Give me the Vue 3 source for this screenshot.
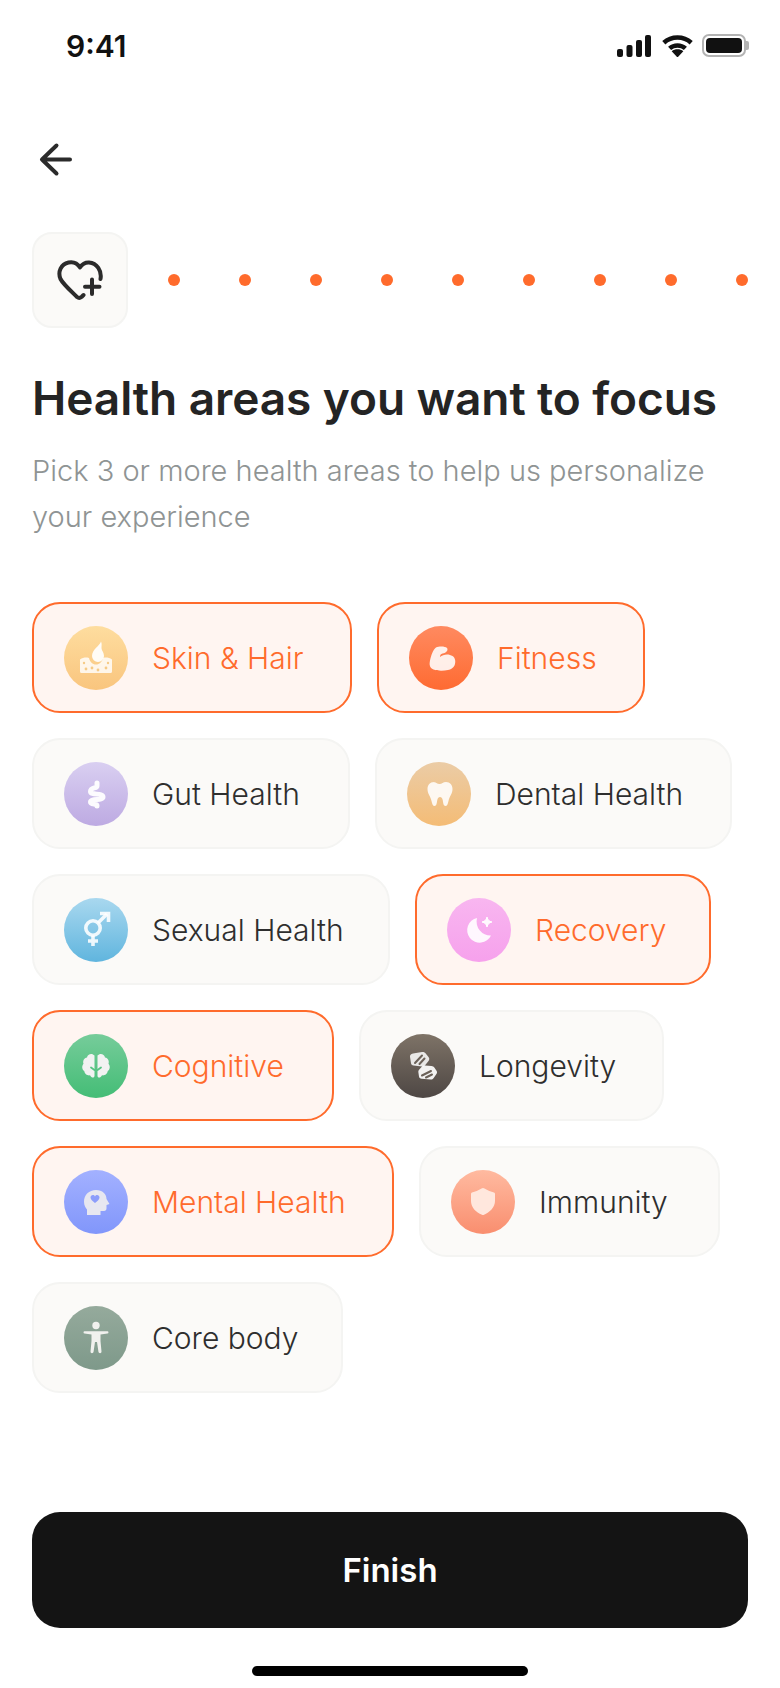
<script setup>
const areas = [
  { key: 'skin', label: 'Skin & Hair', width: 320, on: true, from: '#fedd9f', to: '#f9c57e' },
  { key: 'fitness', label: 'Fitness', width: 268, on: true, from: '#ff8a60', to: '#fe6b32' },
  { key: 'gut', label: 'Gut Health', width: 318, on: false, from: '#d9cff1', to: '#bdaae2' },
  { key: 'dental', label: 'Dental Health', width: 357, on: false, from: '#ebcca6', to: '#f4bc76' },
  { key: 'sexual', label: 'Sexual Health', width: 358, on: false, from: '#a9d8ef', to: '#60b5de' },
  { key: 'recovery', label: 'Recovery', width: 296, on: true, from: '#f8b6f0', to: '#f6a1ec' },
  { key: 'cognitive', label: 'Cognitive', width: 302, on: true, from: '#76cc9a', to: '#44bd76' },
  { key: 'longevity', label: 'Longevity', width: 305, on: false, from: '#7e7367', to: '#4e4744' },
  { key: 'mental', label: 'Mental Health', width: 362, on: true, from: '#a3b1ff', to: '#8196fb' },
  { key: 'immunity', label: 'Immunity', width: 301, on: false, from: '#ffbaa0', to: '#f98e6f' },
  { key: 'core', label: 'Core body', width: 311, on: false, from: '#95aa9c', to: '#7e998a' }
]
const dots = 9
</script>

<template>
  <main class="screen">
    <header class="status">
      <span class="time">9:41</span>
      <div class="status-icons">
        <svg width="34" height="22" viewBox="0 0 34 22" fill="#111">
          <rect x="0" y="14" width="6" height="8" rx="2" />
          <rect x="9.5" y="10" width="6" height="12" rx="2" />
          <rect x="19" y="5" width="6" height="17" rx="2" />
          <rect x="28" y="0" width="6" height="22" rx="2" />
        </svg>
        <svg width="31" height="22" viewBox="0 0 31 22" fill="none" stroke="#111" stroke-width="4.6">
          <path d="M1.800 7.800C9.500.8 21.500.8 29.200 7.800" />
          <path d="M7.600 13.400c4.400-3.900 11.400-3.900 15.800 0" />
          <path d="M15.500 22.500l-5.800-6.300c3.200-2.500 8.400-2.500 11.600 0z" fill="#111" stroke="none" />
        </svg>
        <div class="battery"><i class="battery-level"></i><b class="battery-cap"></b></div>
      </div>
    </header>

    <nav class="nav">
      <svg width="36" height="36" viewBox="0 0 36 36" fill="none" stroke="#2b2b2b" stroke-width="4" stroke-linecap="round" stroke-linejoin="round">
        <path d="M32 17.500H4M18.500 3.500 4 17.500 18.500 31.500" />
      </svg>
    </nav>

    <section class="progress">
      <div class="badge">
        <svg width="46" height="40" viewBox="0 0 46 40" fill="none" stroke="#2b2b2b" stroke-width="4" stroke-linecap="round" stroke-linejoin="round">
          <path d="M43.500 19C45 11 40 3 32 2.500 28 2.300 25 4.500 23 7.500 20.500 3.500 16 1.500 11.500 2.500 4 4 .5 12 3.500 19 6 24 16 33 20 37c1.500 1.200 3 1.200 4.500 0l2-2" />
          <path d="M35 19.500V34M28 26.800h14.500" />
        </svg>
      </div>
      <div class="dots"><span v-for="n in dots" :key="n" class="dot"></span></div>
    </section>

    <h1 class="title">Health areas you want to focus</h1>
    <p class="subtitle">Pick 3 or more health areas to help us personalize<br />your experience</p>

    <section class="chips">
      <div
        v-for="a in areas"
        :key="a.key"
        class="chip"
        :class="{ on: a.on }"
        :style="{ width: a.width + 'px' }"
      >
        <span class="circle" :style="{ background: `linear-gradient(180deg, ${a.from}, ${a.to})` }">
          <svg width="64" height="64" viewBox="0 0 64 64" class="glyph">
            <g v-if="a.key === 'skin'">
              <path d="M16 33.500c3-2 6-2.500 9-1.500 1 4 3.500 6.500 7 6.500s6-2.500 7-6.500c3-1 6-.500 9 1.500v12a1.500 1.500 0 0 1-1.500 1.500h-29a1.500 1.500 0 0 1-1.500-1.500z" fill="#fff" fill-opacity=".82" />
              <path d="M37 15.500c-1 4-9 8-9 14.500a6 6 0 0 0 12 0c0-4-2.500-5-2.500-8.500 0-2 .500-4-.500-6z" fill="#fff" fill-opacity=".92" />
              <g fill="#f6cb86"><circle cx="22" cy="43" r="1.400" /><circle cx="28" cy="42" r="1.400" /><circle cx="34" cy="44" r="1.400" /><circle cx="42" cy="42" r="1.400" /><circle cx="20" cy="37" r="1.200" /><circle cx="44" cy="37" r="1.200" /></g>
            </g>
            <g v-else-if="a.key === 'fitness'">
              <path d="M27 21.500c3-1.500 9-1.500 11 .5 1.500 2-.5 5-4.500 5.500-1.500.3-2.500 1.500-2.500 3.500 3-3 9-3.500 12.500-1 3 2 3.500 6 2 9.500-1.500 3-3.500 3.800-6.500 4.500-5 1-10.500 1-14.500-.5-4-1.700-4.300-5-3.500-9 1-5 3-11 6-13z" fill="#fff" fill-opacity=".88" />
            </g>
            <g v-else-if="a.key === 'gut'">
              <path d="M33 21v3c0 2.800-6.500 1-6.500 5.500 0 4.200 12.500 1 12.500 5.500 0 3.800-12.500 1-12.500 5 0 3 6.500 1 6.500 3.500v.5" fill="none" stroke="#fff" stroke-opacity=".94" stroke-width="5" stroke-linecap="round" stroke-linejoin="round" />
            </g>
            <g v-else-if="a.key === 'dental'">
              <path d="M26 20c3 0 4 2 6.500 2s3.500-2 6.500-2c4 0 6.500 3 6.500 7 0 5-3 7-4 12-.6 3-1.500 5-3 5-2 0-2.300-3-2.800-6-.3-2-1.500-3-2.700-3s-2.400 1-2.700 3c-.5 3-.8 6-2.800 6-1.500 0-2.400-2-3-5-1-5-4-7-4-12 0-4 2.500-7 6.500-7z" fill="#fff" fill-opacity=".88" />
            </g>
            <g v-else-if="a.key === 'sexual'" fill="none" stroke="#fff" stroke-opacity=".88" stroke-width="3.600">
              <circle cx="29" cy="30" r="7.200" />
              <path d="M34 25 43 16M29 37.500V48M24 43h10" />
              <path d="M36 15.500h8.500V24" stroke-linejoin="miter" />
            </g>
            <g v-else-if="a.key === 'recovery'" fill="#fff" fill-opacity=".9">
              <path d="M30 20a12.500 12.500 0 1 0 14 17.500A14 14 0 0 1 30 20z" />
              <path d="M40 19c.7 3 2 4.300 5 5-3 .7-4.300 2-5 5-.7-3-2-4.300-5-5 3-.7 4.300-2 5-5z" stroke="#fff" stroke-width="1" stroke-linejoin="round" />
            </g>
            <g v-else-if="a.key === 'cognitive'">
              <path d="M30.500 21.500c-2.500-3-7-1.500-7.500 2-3 .5-4.500 3.500-3.500 6.200-2 2.300-1.500 6 .8 7.300.2 3 3.500 5 5.700 4.300 1.500 3 4.500 3 4.500.5z" fill="#f2f2f2" />
              <path d="M33.500 21.500c2.500-3 7-1.500 7.500 2 3 .5 4.500 3.500 3.500 6.200 2 2.300 1.500 6-.8 7.300-.2 3-3.500 5-5.700 4.300-1.500 3-4.500 3-4.500.5z" fill="#f2f2f2" />
              <path d="M27 33.500l3.500 2.500M37 33.500 33.500 36" stroke="#58c384" stroke-width="1.800" stroke-linecap="round" fill="none" />
            </g>
            <g v-else-if="a.key === 'longevity'">
              <path d="M22 19.500l9-1.500c1.500-.2 2.500.3 3.500 1.300l3 3.700c1 1.200 1 2.500.2 3.700l-4 5c-.7.8-1.700 1.100-2.700.9l-8.500-1.100c-1.300-.2-2.300-1-2.500-2.300l-1-6.500c-.2-1.300.8-2.600 3-3.200z" fill="#fff" fill-opacity=".85" />
              <path d="M34 31.500l6.500.5c1.300.1 2.200.7 3 1.700l2 3c.7 1 .7 2 .1 3l-3.100 4.500c-.7 1-1.600 1.400-2.800 1.300l-9.200-.7c-1.300-.1-2.300-1-2.500-2.300l-.6-4c-.2-1.200.1-2.200.9-3l2.700-3c.8-.9 1.700-1.100 3-1z" fill="#fff" fill-opacity=".92" />
              <path d="M24 29l7-7.500M28.500 30l5-5.500M31 41.500l9-4.500M35 43.500l6-3" stroke="#6b6158" stroke-width="2" stroke-linecap="round" fill="none" />
            </g>
            <g v-else-if="a.key === 'mental'">
              <path d="M32 20c-7 0-12 5-12 11.500 0 4 1.500 6 3 8V45h13.500v-4h3.500c1.500 0 2.500-1 2.500-2.500v-3.500l3-1-3-5c0-5-4-9-10.500-9z" fill="#e7e7f0" />
              <path d="M31 33c-2-1.700-4.500-3.300-4.500-5.500 0-2.600 3.300-3.300 4.500-1.100 1.200-2.200 4.500-1.500 4.500 1.100 0 2.200-2.500 3.800-4.500 5.500z" fill="#8c9dfb" />
            </g>
            <g v-else-if="a.key === 'immunity'">
              <path d="M30.500 18.500c1-.7 2-.7 3 0 3 2 6.500 3.200 9.500 4 .7.200 1 .7 1 1.500v7c0 6.500-5.500 11.500-11 13.700-.7.300-1.300.3-2 0C25 42.500 20 37.500 20 31v-7c0-.8.300-1.300 1-1.500 3-.8 6.500-2 9.500-4z" fill="#ffe7dd" />
            </g>
            <g v-else fill="#f1f1ee">
              <circle cx="32" cy="19.500" r="3.700" />
              <path d="M20.500 25.200h23c1.300 0 1.300 2.300 0 2.300L36.500 28.500v6.500l1 10.500c.1 2.200-2.900 2.200-3.100 0L33 36h-2l-1.400 9.500c-.2 2.200-3.200 2.200-3.100 0l1-10.500v-6.500l-7-1c-1.300 0-1.300-2.300 0-2.300z" />
            </g>
          </svg>
        </span>
        <span class="label">{{ a.label }}</span>
      </div>
    </section>

    <div class="footer">
      <button class="finish">Finish</button>
      <div class="home"></div>
    </div>
  </main>
</template>

<style scoped>
.screen {
  width: 780px;
  height: 1688px;
  background: #fff;
  display: flex;
  flex-direction: column;
  font-family: Inter, "Liberation Sans", sans-serif;
  overflow: hidden;
  box-sizing: border-box;
}
.status {
  height: 92px;
  flex: none;
  display: flex;
  justify-content: space-between;
  align-items: flex-start;
  padding: 34px 34px 0 66px;
  box-sizing: border-box;
}
.time {
  font-family: Inter, "Liberation Sans", sans-serif;
  font-size: 30px;
  line-height: 24px;
  font-weight: 600;
  color: #111;
}
.status-icons {
  display: flex;
  align-items: center;
  gap: 11px;
  height: 23px;
}
.battery {
  position: relative;
  width: 44px;
  height: 23px;
  margin-left: -2px;
  box-sizing: border-box;
  border: 2px solid #b3b3b3;
  border-radius: 7px;
  padding: 2px;
  display: flex;
}
.battery-level {
  flex: 1;
  background: #111;
  border-radius: 4px;
}
.battery-cap {
  position: absolute;
  right: -5px;
  top: 5px;
  width: 3px;
  height: 9px;
  background: #b3b3b3;
  border-radius: 0 2px 2px 0;
}
.nav {
  height: 140px;
  flex: none;
  padding: 50px 0 0 38px;
  box-sizing: border-box;
}
.nav svg {
  display: block;
}
.progress {
  flex: none;
  display: flex;
  align-items: center;
  padding: 0 32px;
  gap: 40px;
}
.badge {
  width: 96px;
  height: 96px;
  flex: none;
  box-sizing: border-box;
  background: #fbfaf8;
  border: 2px solid #f4f4f2;
  border-radius: 20px;
  display: flex;
  align-items: center;
  justify-content: center;
}
.dots {
  flex: 1;
  display: flex;
  justify-content: space-between;
}
.dot {
  width: 12px;
  height: 12px;
  border-radius: 50%;
  background: #ff6b2c;
}
.title {
  margin: 42px 32px 0;
  font-size: 46px;
  line-height: 56px;
  font-weight: 600;
  color: #242424;
  letter-spacing: -0.07px;
  white-space: nowrap;
}
.subtitle {
  margin: 22px 32px 0;
  font-size: 29px;
  line-height: 46px;
  font-weight: 350;
  color: #8f9494;
  white-space: nowrap;
}
.chips {
  margin-top: 62px;
  padding: 0 32px;
  display: flex;
  flex-wrap: wrap;
  gap: 25px;
}
.chip {
  height: 111px;
  box-sizing: border-box;
  display: flex;
  align-items: center;
  gap: 24px;
  padding-left: 30px;
  background: #fbfaf8;
  border: 2px solid #f4f4f2;
  border-radius: 28px;
}
.chip.on {
  background: #fff5f1;
  border-color: #ff6b2c;
}
.circle {
  width: 64px;
  height: 64px;
  border-radius: 50%;
  flex: none;
  display: block;
}
.glyph {
  display: block;
}
.label {
  font-size: 30px;
  line-height: 40px;
  font-weight: 350;
  color: #2e2e2e;
  white-space: nowrap;
}
.chip.on .label {
  color: #ff6b2c;
}
.footer {
  margin-top: auto;
  flex: none;
  padding: 0 32px 12px;
  display: flex;
  flex-direction: column;
  align-items: center;
}
.finish {
  width: 100%;
  height: 116px;
  border: none;
  border-radius: 28px;
  background: #141414;
  color: #fff;
  font-family: Inter, "Liberation Sans", sans-serif;
  font-size: 33px;
  font-weight: 600;
}
.home {
  width: 276px;
  height: 10px;
  margin-top: 38px;
  background: #000;
  border-radius: 5px;
}
</style>
